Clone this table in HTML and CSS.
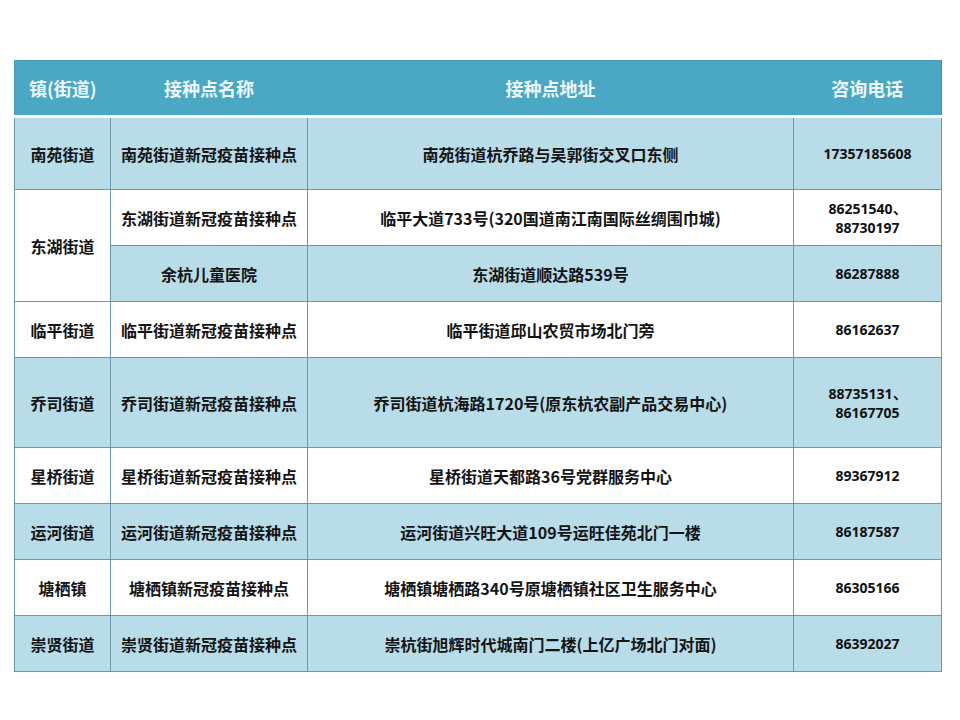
FILE: index.html
```html
<!DOCTYPE html>
<html lang="zh-CN">
<head>
<meta charset="utf-8">
<title>接种点</title>
<link rel="stylesheet" href="styles.css">
</head>
<body>
<div class="page">
<table class="sites">
  <colgroup>
    <col class="c1"><col class="c2"><col class="c3"><col class="c4">
  </colgroup>
  <thead>
    <tr>
      <th>镇(街道)</th>
      <th>接种点名称</th>
      <th>接种点地址</th>
      <th>咨询电话</th>
    </tr>
  </thead>
  <tbody>
    <tr class="lt h72">
      <td>南苑街道</td>
      <td class="nm">南苑街道新冠疫苗接种点</td>
      <td>南苑街道杭乔路与吴郭街交叉口东侧</td>
      <td class="tel">17357185608</td>
    </tr>
    <tr class="wt h56">
      <td rowspan="2" class="wt">东湖街道</td>
      <td class="nm">东湖街道新冠疫苗接种点</td>
      <td>临平大道733号(320国道南江南国际丝绸围巾城)</td>
      <td class="tel two">86251540、<br>88730197</td>
    </tr>
    <tr class="lt h56">
      <td class="nm">余杭儿童医院</td>
      <td>东湖街道顺达路539号</td>
      <td class="tel">86287888</td>
    </tr>
    <tr class="wt h56">
      <td>临平街道</td>
      <td class="nm">临平街道新冠疫苗接种点</td>
      <td>临平街道邱山农贸市场北门旁</td>
      <td class="tel">86162637</td>
    </tr>
    <tr class="lt h90">
      <td>乔司街道</td>
      <td class="nm">乔司街道新冠疫苗接种点</td>
      <td>乔司街道杭海路1720号(原东杭农副产品交易中心)</td>
      <td class="tel two">88735131、<br>86167705</td>
    </tr>
    <tr class="wt h56">
      <td>星桥街道</td>
      <td class="nm">星桥街道新冠疫苗接种点</td>
      <td>星桥街道天都路36号党群服务中心</td>
      <td class="tel">89367912</td>
    </tr>
    <tr class="lt h56">
      <td>运河街道</td>
      <td class="nm">运河街道新冠疫苗接种点</td>
      <td>运河街道兴旺大道109号运旺佳苑北门一楼</td>
      <td class="tel">86187587</td>
    </tr>
    <tr class="wt h56">
      <td>塘栖镇</td>
      <td class="nm">塘栖镇新冠疫苗接种点</td>
      <td>塘栖镇塘栖路340号原塘栖镇社区卫生服务中心</td>
      <td class="tel">86305166</td>
    </tr>
    <tr class="lt h56">
      <td>崇贤街道</td>
      <td class="nm">崇贤街道新冠疫苗接种点</td>
      <td>崇杭街旭辉时代城南门二楼(上亿广场北门对面)</td>
      <td class="tel">86392027</td>
    </tr>
  </tbody>
</table>
</div>
</body>
</html>
```

FILE: styles.css
```css
html, body {
  margin: 0;
  padding: 0;
  background: #ffffff;
}

.page {
  padding: 60px 0 0 14px;
}

.sites {
  border-collapse: collapse;
  table-layout: fixed;
  width: 927px;
  font-family: "Noto Sans CJK SC", "Noto Sans", sans-serif;
  color: #141414;
}

.c1 { width: 96px; }
.c2 { width: 197px; }
.c3 { width: 486px; }
.c4 { width: 148px; }

.sites th {
  height: 54px;
  padding: 0;
  background: #4aa8c4;
  color: #eef7fa;
  font-size: 18px;
  font-weight: 700;
  text-align: center;
  vertical-align: middle;
  border-top: 1px solid #4b9bb3;
  border-bottom: 3px solid #ffffff;
}

.sites th:first-child {
  border-left: 1px solid #4b9bb3;
}

.sites th:last-child {
  border-right: 1px solid #3d8ea8;
}

.sites td {
  padding: 0 4px;
  text-align: center;
  vertical-align: middle;
  font-size: 16px;
  font-weight: 700;
  line-height: 20px;
  border: 1px solid #6b98aa;
  white-space: nowrap;
}

.sites td.nm {
  font-size: 16px;
}

.sites td.tel {
  font-family: "Open Sans", "Liberation Sans", sans-serif;
  font-size: 14px;
  line-height: 19px;
  color: #111111;
}

.lt td { background: #b8dce8; }
.wt td { background: #ffffff; }
.sites td.wt { background: #ffffff; }

.h72 td { height: 71px; }
.h56 td { height: 55px; }
.h90 td { height: 89px; }
```
